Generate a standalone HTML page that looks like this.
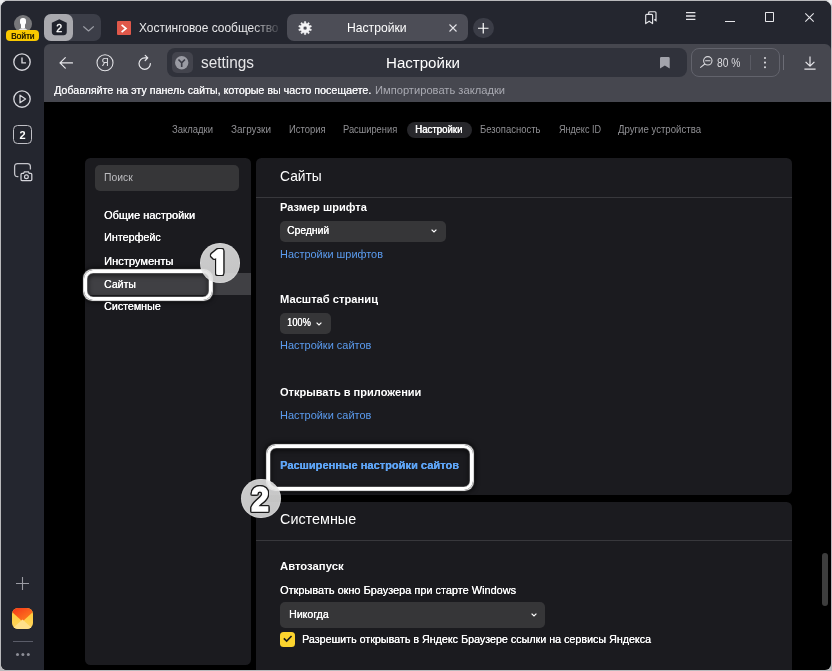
<!DOCTYPE html>
<html lang="ru"><head><meta charset="utf-8"><title>Настройки</title>
<style>
html,body{margin:0;padding:0}
body{width:832px;height:671px;overflow:hidden;background:radial-gradient(circle at 0 0,#ededef 0,#ededef 3px,rgba(237,237,239,0) 7px),radial-gradient(circle at 100% 0,#ededef 0,#ededef 3px,rgba(237,237,239,0) 7px),#b9b9bc;font-family:"Liberation Sans",sans-serif;position:relative}
#win{position:absolute;left:1px;top:1px;width:829.8px;height:668.6px;background:#000;border-radius:7px 7px 6px 6px;overflow:hidden;will-change:transform}
#win *{position:absolute;box-sizing:border-box}
#win span{white-space:nowrap;line-height:1;transform-origin:0 50%}
.abs{position:absolute}
#titlebar{left:0;top:0;width:830px;height:101px;background:#24262f}
#side{left:0;top:0;width:43px;height:669px;background:#24262f}
#toolbar{left:43px;top:43px;width:787px;height:57.5px;background:#46474f;border-radius:6px 6px 0 0}
#abar{left:166px;top:47px;width:520px;height:28.5px;background:#30323b;border-radius:8px}
.panel{background:#1b1b1f;border-radius:5.5px}
.sel{background:#363638;border-radius:5px}
svg{overflow:visible}
.ring{border:3.4px solid #fff;border-radius:9px;box-shadow:0 0 0.8px 0.3px rgba(255,255,255,.9),0 0 5px 1.5px rgba(0,0,0,.8),inset 0 0 0.8px 0.3px rgba(255,255,255,.8),inset 0 1.5px 5px 1px rgba(0,0,0,.6)}
.ball{width:39.5px;height:39.5px;border-radius:50%;background:linear-gradient(160deg,rgba(232,232,232,.865),rgba(222,222,222,.865));box-shadow:inset 0 0 0 1px rgba(255,255,255,.18)}
.n1{font:800 31px "NanumGothic","Liberation Sans",sans-serif}
.n2{font:700 34.8px "Liberation Sans",sans-serif}
.nb{fill:#1a1a1a;stroke:#1a1a1a;stroke-width:3.6px;stroke-linejoin:miter}
.nf{fill:#fff;stroke:#fff;stroke-width:1.3px;stroke-linejoin:miter}
.ol{filter:drop-shadow(1px 0 0 #1a1a1a) drop-shadow(-1px 0 0 #1a1a1a) drop-shadow(0 1px 0 #1a1a1a) drop-shadow(0 -1px 0 #1a1a1a)}
.n1 .nb{stroke-width:4.2px}.n1 .nf{stroke-width:1.9px}
.mb{text-shadow:0.3px 0 0 currentColor}
.hb{text-shadow:0.45px 0 0 currentColor}
.sb{text-shadow:0.18px 0 0 currentColor}
</style></head><body>
<div id="win">
<div id="titlebar"></div>
<div id="side"></div>
<!-- avatar -->
<div style="left:12.8px;top:14.2px;width:18px;height:18px;border-radius:50%;background:#77777a;overflow:hidden">
 <div style="left:6.3px;top:2.6px;width:5.6px;height:7.2px;border-radius:2.8px;background:#fff"></div>
 <div style="left:7.3px;top:8px;width:3.6px;height:5px;background:#fff"></div>
 <div style="left:3.2px;top:12.4px;width:11.8px;height:8px;border-radius:6px 6px 0 0;background:#ececee"></div>
</div>
<div style="left:5.25px;top:28.8px;width:32.7px;height:11px;border-radius:4px;background:#f9c800"></div>
<!-- tab group button -->
<div style="left:43px;top:13.4px;width:56.8px;height:26.8px;border-radius:7px;background:#3c3e48"></div>
<div style="left:43px;top:13.4px;width:29px;height:26.8px;border-radius:7px;background:#a9a9ae"></div>
<svg style="left:49.6px;top:18.4px" width="16.6" height="16.6" viewBox="0 0 16 16"><path d="M8 0.3 L15.2 3.6 V12.6 Q15.2 15.6 12.2 15.6 H3.8 Q0.8 15.6 0.8 12.6 V3.6 Z" fill="#20222c"/><text x="8" y="12.4" text-anchor="middle" font-size="10.2" font-weight="400" stroke="#fff" stroke-width="0.35" fill="#fff" style="font-family:'Liberation Sans',sans-serif">2</text></svg>
<svg style="left:81.6px;top:24.5px" width="11" height="7" viewBox="0 0 11 7"><path d="M0.7 0.7 L5.55 5 L10.4 0.7" fill="none" stroke="#9a9ca4" stroke-width="1.15" stroke-linecap="round" stroke-linejoin="round"/></svg>
<!-- tab 1 favicon -->
<div style="left:115.5px;top:20px;width:14.5px;height:14px;background:#e0584a;border-radius:1px"></div>
<svg style="left:119px;top:22.5px" width="8" height="9" viewBox="0 0 8 9"><path d="M1.6 0.8 L6 4.5 L1.6 8.2" fill="none" stroke="#fff" stroke-width="1.7"/></svg>
<!-- active tab -->
<div style="left:285.9px;top:13.1px;width:181.1px;height:27px;border-radius:7px;background:#4c4d56"></div>
<svg style="left:296.5px;top:19.9px" width="14.2" height="14.2" viewBox="-7.3 -7.3 14.6 14.6"><path fill="#f4f4f6" fill-rule="evenodd" stroke="#f4f4f6" stroke-width="0.5" stroke-linejoin="round" d="M-0.86 -4.82 L-0.71 -6.66 L0.71 -6.66 L0.86 -4.82 L2.14 -4.41 L3.34 -5.81 L4.49 -4.97 L3.53 -3.40 L4.32 -2.31 L6.12 -2.74 L6.56 -1.38 L4.85 -0.68 L4.85 0.68 L6.56 1.38 L6.12 2.74 L4.32 2.31 L3.53 3.40 L4.49 4.97 L3.34 5.81 L2.14 4.41 L0.86 4.82 L0.71 6.66 L-0.71 6.66 L-0.86 4.82 L-2.14 4.41 L-3.34 5.81 L-4.49 4.97 L-3.53 3.40 L-4.32 2.31 L-6.12 2.74 L-6.56 1.38 L-4.85 0.68 L-4.85 -0.68 L-6.56 -1.38 L-6.12 -2.74 L-4.32 -2.31 L-3.53 -3.40 L-4.49 -4.97 L-3.34 -5.81 L-2.14 -4.41 Z M2 0 A2 2 0 1 0 -2 0 A2 2 0 1 0 2 0 Z"/></svg>
<svg style="left:447.5px;top:23px" width="8" height="8" viewBox="0 0 8 8"><path d="M0.5 0.5 L7.5 7.5 M7.5 0.5 L0.5 7.5" stroke="#e4e4e8" stroke-width="1.1"/></svg>
<div style="left:472px;top:16.5px;width:20.5px;height:20.5px;border-radius:50%;background:#3b3d47"></div>
<svg style="left:477px;top:21.5px" width="10.5" height="10.5" viewBox="0 0 10.5 10.5"><path d="M5.25 0 V10.5 M0 5.25 H10.5" stroke="#fff" stroke-width="1.2"/></svg>
<!-- window controls -->
<svg style="left:644px;top:10px" width="12" height="14" viewBox="0 0 12 14"><path d="M3.7 3.3 V1.7 Q3.7 0.7 4.7 0.7 H10 Q11 0.7 11 1.7 V9.6 L9.2 8.4" fill="none" stroke="#e6e6ea" stroke-width="1.15"/><path d="M0.7 4.3 Q0.7 3.3 1.7 3.3 H6.6 Q7.6 3.3 7.6 4.3 V12.6 L4.15 10.2 L0.7 12.6 Z" fill="none" stroke="#e6e6ea" stroke-width="1.15" stroke-linejoin="round"/></svg>
<svg style="left:684.6px;top:11.4px" width="10" height="10" viewBox="0 0 10 10"><path d="M0 0.65 H9.4 M0 4 H9.4 M0 7.35 H9.4" stroke="#e6e6ea" stroke-width="1.3"/></svg>
<div style="left:724.3px;top:19.5px;width:9.4px;height:1.3px;background:#e6e6ea"></div>
<div style="left:764px;top:11.1px;width:9.2px;height:10px;border:1.15px solid #e6e6ea;border-radius:0.8px"></div>
<svg style="left:804px;top:12px" width="9" height="9" viewBox="0 0 9 9"><path d="M0.3 0.3 L8.7 8.7 M8.7 0.3 L0.3 8.7" stroke="#e6e6ea" stroke-width="1.1"/></svg>
<!-- toolbar -->
<div id="toolbar"></div>
<div id="abar"></div>
<svg style="left:57.8px;top:56px" width="14" height="12" viewBox="0 0 14 12"><path d="M13.5 5.9 H1 M6.3 0.6 L1 5.9 L6.3 11.2" fill="none" stroke="#e8e8ec" stroke-width="1.2" stroke-linecap="round" stroke-linejoin="round"/></svg>
<svg style="left:95.2px;top:53px" width="18" height="18" viewBox="0 0 18 18"><circle cx="9" cy="8.7" r="8" fill="none" stroke="#e0e0e4" stroke-width="1.1"/><text x="9" y="12.3" text-anchor="middle" font-size="10" fill="#e0e0e4" style="font-family:'Liberation Sans',sans-serif">Я</text></svg>
<svg style="left:137px;top:53.7px" width="14" height="15" viewBox="0 0 14 15"><path d="M12.4 8.6 A5.7 5.7 0 1 1 6.7 2.9 H9.6 M7.2 0.4 L9.8 2.9 L7.2 5.5" fill="none" stroke="#e8e8ec" stroke-width="1.2" stroke-linecap="round" stroke-linejoin="round"/></svg>
<div style="left:171px;top:51px;width:21px;height:20.5px;border-radius:5px;background:#43444d"></div>
<svg style="left:173.8px;top:54.8px" width="13.4" height="13.4" viewBox="0 0 14 14"><circle cx="7" cy="7" r="7" fill="#9a9ba3"/><path d="M3.6 3.6 L7 7.2 L10.4 3.6 M7 7.2 V11.6" fill="none" stroke="#3b3c46" stroke-width="1.7"/></svg>
<svg style="left:658.8px;top:55.5px" width="10" height="12" viewBox="0 0 10 12"><path d="M0 1.2 Q0 0 1.2 0 H8.5 Q9.7 0 9.7 1.2 V11.6 L4.85 8.6 L0 11.6 Z" fill="#a2a3ab"/></svg>
<div style="left:689.5px;top:47px;width:89px;height:28.5px;border:1px solid #62636c;border-radius:8px"></div>
<svg style="left:699.4px;top:54.7px" width="13" height="12" viewBox="0 0 13 12"><circle cx="7.8" cy="4.8" r="4.2" fill="none" stroke="#d8d8dc" stroke-width="1.1"/><path d="M4.8 8 L0.6 11.4 M5.6 4.8 H10" fill="none" stroke="#d8d8dc" stroke-width="1.1" stroke-linecap="round"/></svg>
<div style="left:749px;top:53.5px;width:1px;height:15.5px;background:#5a5b64"></div>
<div style="left:763.2px;top:56.2px;width:1.8px;height:1.8px;border-radius:50%;background:#d8d8dc;box-shadow:0 4.6px 0 #d8d8dc,0 9.2px 0 #d8d8dc"></div>
<div style="left:782.3px;top:54px;width:1.2px;height:14.5px;background:#6c6d76"></div>
<svg style="left:803px;top:55px" width="12" height="14" viewBox="0 0 12 14"><path d="M6 0.4 V10 M1.6 5.8 L6 10.2 L10.4 5.8 M0.4 13.2 H11.6" fill="none" stroke="#e8e8ec" stroke-width="1.2" stroke-linejoin="round"/></svg>
<!-- side icons -->
<svg style="left:12.3px;top:52.3px" width="18" height="18" viewBox="0 0 18 18"><circle cx="9" cy="9" r="8.2" fill="none" stroke="#d4d4da" stroke-width="1.35"/><path d="M9 4.4 V9.9 H13" fill="none" stroke="#d4d4da" stroke-width="1.4"/></svg>
<svg style="left:12.3px;top:88.5px" width="18" height="18" viewBox="0 0 18 18"><circle cx="9" cy="9" r="8.2" fill="none" stroke="#d4d4da" stroke-width="1.35"/><path d="M7 5.2 L12.6 9 L7 12.8 Z" fill="none" stroke="#d4d4da" stroke-width="1.3" stroke-linejoin="round"/></svg>
<div style="left:12px;top:124px;width:19px;height:19px;border:1.4px solid #c0c0c6;border-radius:4.5px"></div>
<svg style="left:12px;top:124px" width="19" height="19" viewBox="0 0 19 19"><text x="9.5" y="13.6" text-anchor="middle" font-size="11" font-weight="700" fill="#fff" style="font-family:'Liberation Sans',sans-serif">2</text></svg>
<svg style="left:13px;top:161.5px" width="19" height="19" viewBox="0 0 19 19"><path d="M4.4 13.6 H3.6 Q0.6 13.6 0.6 10.6 V3.6 Q0.6 0.6 3.6 0.6 H13.4 Q16.4 0.6 16.4 3.6 V6.4" fill="none" stroke="#c4c4ca" stroke-width="1.3"/><path d="M7 11.4 Q7 10.4 8 10.4 H9.6 L10.4 8.8 H14.4 L15.2 10.4 H16.8 Q17.8 10.4 17.8 11.4 V16.6 Q17.8 17.6 16.8 17.6 H8 Q7 17.6 7 16.6 Z" fill="none" stroke="#d4d4da" stroke-width="1.25"/><circle cx="12.4" cy="13.8" r="1.9" fill="none" stroke="#d4d4da" stroke-width="1.2"/></svg>
<svg style="left:14.5px;top:575.5px" width="13" height="13" viewBox="0 0 13 13"><path d="M6.5 0 V13 M0 6.5 H13" stroke="#9a9ba3" stroke-width="1.1"/></svg>
<div style="left:11px;top:607px;width:21px;height:21px;border-radius:6px;background:linear-gradient(180deg,#ffc830 0%,#ffd660 100%);overflow:hidden">
 <svg style="left:0;top:0" width="21" height="21" viewBox="0 0 21 21"><defs><linearGradient id="mg" x1="0" y1="0" x2="1" y2="1"><stop offset="0" stop-color="#f5331a"/><stop offset="1" stop-color="#ff8a1e"/></linearGradient></defs><path d="M0 0 H21 V4 L10.5 13.5 L0 4 Z" fill="url(#mg)"/><path d="M0 21 L10.5 11.5 L21 21 Z" fill="#ffe08a"/></svg>
</div>
<div style="left:11.5px;top:640px;width:20px;height:1px;background:#5a5c68"></div>
<div style="left:14.5px;top:651.5px;width:3.6px;height:3.6px;border-radius:50%;background:#8c8d96;box-shadow:5.4px 0 0 #8c8d96,10.8px 0 0 #8c8d96"></div>
<!-- content -->
<div style="left:405.5px;top:121px;width:65.5px;height:16px;border-radius:8px;background:#27272b"></div>
<div class="panel" style="left:83.5px;top:157px;width:166.5px;height:506.5px"></div>
<div class="sel" style="left:94px;top:164.2px;width:144px;height:25.8px"></div>
<div style="left:83.5px;top:272px;width:166.5px;height:22px;background:#404044"></div>
<div class="panel" style="left:255px;top:157px;width:536px;height:336.5px"></div>
<div style="left:255px;top:196px;width:536px;height:1px;background:#38383c"></div>
<div class="sel" style="left:279px;top:219.5px;width:166px;height:21.3px"></div>
<div class="sel" style="left:279px;top:311.5px;width:50.5px;height:21.5px"></div>
<div class="panel" style="left:255px;top:500.8px;width:536px;height:180px"></div>
<div style="left:255px;top:539px;width:536px;height:1px;background:#38383c"></div>
<div class="sel" style="left:279px;top:601.2px;width:265px;height:25.4px"></div>
<svg class="chev" style="left:430.2px;top:228.2px" width="6" height="4" viewBox="0 0 6 4"><path d="M0.6 0.6 L3 3 L5.4 0.6" fill="none" stroke="#fff" stroke-width="1.2"/></svg>
<svg class="chev" style="left:315px;top:321.4px" width="6" height="4" viewBox="0 0 6 4"><path d="M0.6 0.6 L3 3 L5.4 0.6" fill="none" stroke="#fff" stroke-width="1.2"/></svg>
<svg class="chev" style="left:529.5px;top:612.4px" width="6" height="4" viewBox="0 0 6 4"><path d="M0.6 0.6 L3 3 L5.4 0.6" fill="none" stroke="#fff" stroke-width="1.2"/></svg>
<div style="left:279.1px;top:630.8px;width:14.5px;height:14.9px;border-radius:3.5px;background:#fcd42e"></div>
<svg style="left:281.8px;top:634.4px" width="9.4" height="7.3" viewBox="0 0 9 7"><path d="M0.8 3.2 L3.5 5.9 L8.2 0.9" fill="none" stroke="#1a1a1a" stroke-width="1.5"/></svg>
<div style="left:821px;top:552px;width:6px;height:52.5px;border-radius:3px;background:#3d3d3d"></div>
<!-- annotations -->
<div class="ring" style="left:82.8px;top:269.1px;width:128px;height:29.6px"></div>
<div class="ball" style="left:199px;top:242px"></div>
<svg class="ol" style="left:198.9px;top:242px" width="40" height="40" viewBox="0 0 40 40"><g class="n1" transform="translate(-2 0) scale(1.14 1)"><text class="nf" x="18.4" y="31.2" text-anchor="middle">1</text></g></svg>
<div class="ring" style="left:266px;top:444.4px;width:206.2px;height:44.4px"></div>
<div class="ball" style="left:240.3px;top:477.8px"></div>
<svg class="ol" style="left:240.3px;top:477.8px" width="40" height="40" viewBox="0 0 40 40"><g class="n2" transform="translate(1.3 0) scale(0.93 1)"><text class="nf" x="18.9" y="32.1" text-anchor="middle">2</text></g></svg>
<span class="mb" style="left:10.40px;top:30.10px;font-size:9.8px;font-weight:400;color:#241c00;transform:scaleX(0.8533);">Войти</span>
<span  style="left:138.00px;top:21.26px;font-size:12.8px;font-weight:400;color:#e8e8ea;transform:scaleX(0.9326);">Хостинговое сообщество</span>
<span  style="left:346.40px;top:21.26px;font-size:12.8px;font-weight:400;color:#ffffff;transform:scaleX(0.9498);">Настройки</span>
<span  style="left:200.00px;top:53.65px;font-size:15.77px;font-weight:400;color:#e6e6e8;transform:scaleX(0.9750);">settings</span>
<span  style="left:384.50px;top:53.90px;font-size:15.48px;font-weight:400;color:#ffffff;transform:scaleX(0.9750);">Настройки</span>
<span  style="left:716.30px;top:55.97px;font-size:12.2px;font-weight:400;color:#dcdce0;transform:scaleX(0.8423);">80 %</span>
<span class="sb" style="left:53.00px;top:84.21px;font-size:10.98px;font-weight:400;color:#f4f4f6;transform:scaleX(0.9750);">Добавляйте на эту панель сайты, которые вы часто посещаете.</span>
<span  style="left:374.00px;top:84.19px;font-size:11px;font-weight:400;color:#a9aab2;transform:scaleX(1.0134);">Импортировать закладки</span>
<span  style="left:171.00px;top:124.03px;font-size:10px;font-weight:400;color:#909094;transform:scaleX(0.9473);">Закладки</span>
<span  style="left:229.70px;top:124.03px;font-size:10px;font-weight:400;color:#909094;transform:scaleX(0.9938);">Загрузки</span>
<span  style="left:288.00px;top:124.03px;font-size:10px;font-weight:400;color:#909094;transform:scaleX(0.9438);">История</span>
<span  style="left:342.40px;top:124.03px;font-size:10px;font-weight:400;color:#909094;transform:scaleX(0.9320);">Расширения</span>
<span class="hb" style="left:414.40px;top:124.13px;font-size:10px;font-weight:400;color:#ffffff;transform:scaleX(0.9644);">Настройки</span>
<span  style="left:479.00px;top:124.03px;font-size:10px;font-weight:400;color:#909094;transform:scaleX(0.9468);">Безопасность</span>
<span  style="left:557.50px;top:124.03px;font-size:10px;font-weight:400;color:#909094;transform:scaleX(0.9051);">Яндекс ID</span>
<span  style="left:617.00px;top:124.03px;font-size:10px;font-weight:400;color:#909094;transform:scaleX(0.9614);">Другие устройства</span>
<span  style="left:103.00px;top:171.11px;font-size:10.5px;font-weight:400;color:#bdbdc0;transform:scaleX(0.9859);">Поиск</span>
<span class="mb" style="left:103.00px;top:208.60px;font-size:11.1px;font-weight:400;color:#ffffff;transform:scaleX(0.9883);">Общие настройки</span>
<span class="mb" style="left:103.00px;top:230.90px;font-size:11.1px;font-weight:400;color:#ffffff;transform:scaleX(0.9686);">Интерфейс</span>
<span class="mb" style="left:103.00px;top:254.60px;font-size:11.1px;font-weight:400;color:#ffffff;transform:scaleX(1.0016);">Инструменты</span>
<span class="mb" style="left:103.00px;top:277.60px;font-size:11.1px;font-weight:400;color:#ffffff;transform:scaleX(0.9475);">Сайты</span>
<span class="mb" style="left:103.00px;top:300.40px;font-size:11.1px;font-weight:400;color:#ffffff;transform:scaleX(0.9629);">Системные</span>
<span  style="left:279.40px;top:168.44px;font-size:14.6px;font-weight:400;color:#ffffff;transform:scaleX(0.9466);">Сайты</span>
<span  style="left:279.40px;top:200.95px;font-size:11.4px;font-weight:700;color:#ffffff;transform:scaleX(0.9712);">Размер шрифта</span>
<span class="mb" style="left:286.30px;top:224.73px;font-size:10px;font-weight:400;color:#ffffff;transform:scaleX(1.0331);">Средний</span>
<span  style="left:279.20px;top:247.76px;font-size:10.8px;font-weight:400;color:#5b9cf0;transform:scaleX(1.0112);">Настройки шрифтов</span>
<span  style="left:279.40px;top:292.75px;font-size:11.4px;font-weight:700;color:#ffffff;transform:scaleX(0.9800);">Масштаб страниц</span>
<span class="mb" style="left:286.30px;top:316.87px;font-size:10.2px;font-weight:400;color:#ffffff;transform:scaleX(0.9094);">100%</span>
<span  style="left:279.20px;top:339.36px;font-size:10.8px;font-weight:400;color:#5b9cf0;transform:scaleX(1.0161);">Настройки сайтов</span>
<span  style="left:279.40px;top:386.35px;font-size:11.4px;font-weight:700;color:#ffffff;transform:scaleX(0.9697);">Открывать в приложении</span>
<span  style="left:279.20px;top:408.86px;font-size:10.8px;font-weight:400;color:#5b9cf0;transform:scaleX(1.0161);">Настройки сайтов</span>
<span class="sb" style="left:279.20px;top:458.83px;font-size:11.3px;font-weight:700;color:#5fa6f8;transform:scaleX(0.9808);">Расширенные настройки сайтов</span>
<span  style="left:279.40px;top:511.34px;font-size:14.6px;font-weight:400;color:#ffffff;transform:scaleX(0.9854);">Системные</span>
<span  style="left:279.20px;top:560.15px;font-size:11.4px;font-weight:700;color:#ffffff;transform:scaleX(0.9916);">Автозапуск</span>
<span class="sb" style="left:279.20px;top:583.66px;font-size:10.8px;font-weight:400;color:#ffffff;transform:scaleX(1.0120);">Открывать окно Браузера при старте Windows</span>
<span class="mb" style="left:288.20px;top:608.74px;font-size:10px;font-weight:400;color:#ffffff;transform:scaleX(1.0573);">Никогда</span>
<span class="sb" style="left:301.00px;top:632.56px;font-size:10.8px;font-weight:400;color:#ffffff;transform:scaleX(0.9926);">Разрешить открывать в Яндекс Браузере ссылки на сервисы Яндекса</span>
<div style="left:250px;top:18px;width:35.5px;height:20px;background:linear-gradient(90deg,rgba(36,38,47,0),rgba(36,38,47,.85) 75%,#24262f)"></div>
</div>
</body></html>
